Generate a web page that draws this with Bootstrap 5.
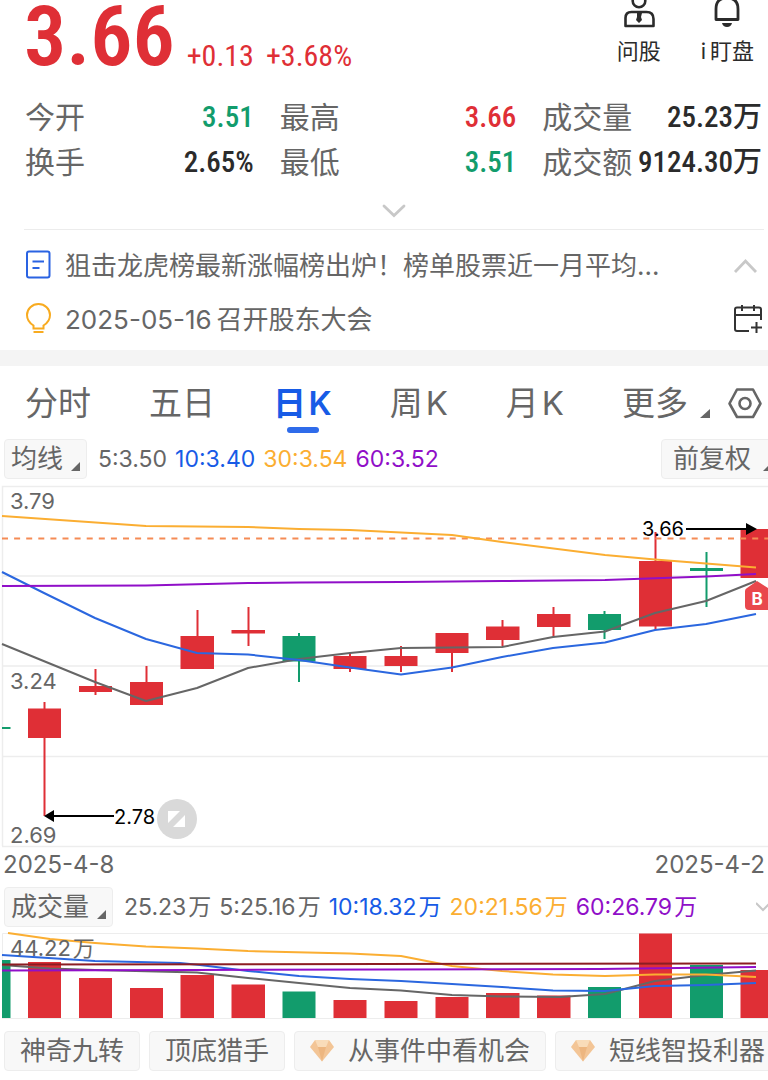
<!DOCTYPE html>
<html lang="zh-CN">
<head>
<meta charset="utf-8">
<meta name="viewport" content="width=device-width, initial-scale=1">
<title>日K 行情</title>
<link rel="stylesheet" href="https://cdn.jsdelivr.net/npm/bootstrap@5.3.0/dist/css/bootstrap.min.css">
<style>
:root{--up:#df2f36;--down:#129c6c;--ink:#666;--blue:#175be6;--gold:#fbae32;--violet:#900fc8}
body{font-family:Inter,"Noto Sans CJK SC",sans-serif;color:var(--ink);background:#fff;overflow-x:hidden}
svg{display:block;flex:none}
.din{font-family:"Roboto Condensed",Roboto,"Noto Sans CJK SC",sans-serif;font-weight:500;color:#2b2b2b}
.c-up{color:var(--up)}.c-down{color:var(--down)}.c-blue{color:var(--blue)}.c-gold{color:var(--gold)}.c-violet{color:var(--violet)}
.quote{height:80px;padding:0 14px 0 24px}
.price{font-size:84px;line-height:74px;font-weight:600}
.delta{font-size:30px;line-height:36px;font-weight:400;padding-top:38px;margin-left:12px}
.tool{font-size:22px;line-height:28px;color:#2b2b2b}
.stats{display:grid;grid-template-columns:229fr 237fr 220fr;column-gap:26px;row-gap:1px;padding:15px 6px 0 25px;font-size:30px;line-height:44px}
.stats .din{font-size:29px;white-space:nowrap}
.expand{padding:0 0 0 20px}
.notes{margin:0 4px 0 24px;border-top:1px solid #ececec;padding:8px 0 4px;font-size:26px}
.notes>div{height:54px}
.notes a{color:var(--ink)}
.band{height:16px;background:#f4f4f4}
.tabs{height:73px;padding:8px 6px 0 25px}
.tabs button{font-size:33px;line-height:58px;color:var(--ink);position:relative}
.tabs .on{color:var(--blue);font-weight:600}
.tabs .on::after{content:"";position:absolute;left:14px;bottom:-1px;width:32px;height:6px;border-radius:3px;background:#2f6bea}
.legendrow{height:40px;font-size:23px;white-space:nowrap;overflow:hidden}
.pick{height:40px;background:#f8f8f8;border:1px solid #ededed;border-radius:4px;font-size:26px;line-height:38px;color:var(--ink);white-space:nowrap;flex:none;padding:0 6px}
.legendrow .pick:first-child{margin-right:11px}
.adjust{width:112px;margin-right:-5px;padding:0 0 0 11px}
.adjust svg{margin-left:12px}
.chips{gap:9px;padding:10px 0}
.chips .pick{padding:0 15px}
.chips svg{margin-right:14px}
.dates{height:36px;font-size:24px;line-height:28px;padding:0 3px}
</style>
</head>
<body>
<header class="quote d-flex">
  <div class="din c-up price">3.66</div>
  <div class="din c-up delta d-flex"><span class="me-2">+0.13</span><span class="ms-1">+3.68%</span></div>
  <div class="d-flex align-items-start ms-auto gap-4">
    <button class="btn p-0 border-0 rounded-0 tool me-3">
      <svg class="mx-auto" width="44" height="37" viewBox="616 0 44 37" fill="none" stroke="#2b2b2b" stroke-width="2.6"><circle cx="638" cy="1" r="6.3"/><path d="M624.500 26V18q0-6 6-6h15q7 0 7 7v7Z" stroke-linejoin="round"/><path d="M636 13h5l-1 4 1 3-3 3-3-3 1-3Z" fill="#2b2b2b" stroke="none"/></svg>问股</button>
    <button class="btn p-0 border-0 rounded-0 tool">
      <svg class="mx-auto" width="44" height="37" viewBox="707 0 44 37" fill="none" stroke="#2b2b2b" stroke-width="2.8"><path d="M718 19.500V9q0-11 11-11t11 11v10.500Z" stroke-linejoin="round"/><path d="M724 23h10q-1 4-5 4t-5-4Z" fill="#2b2b2b" stroke="none"/></svg>i&#8201;盯盘</button>
  </div>
</header>

<section class="stats">
  <div class="d-flex justify-content-between"><span>今开</span><span class="din c-down">3.51</span></div>
  <div class="d-flex justify-content-between"><span>最高</span><span class="din c-up">3.66</span></div>
  <div class="d-flex justify-content-between"><span>成交量</span><span class="din">25.23万</span></div>
  <div class="d-flex justify-content-between"><span>换手</span><span class="din">2.65%</span></div>
  <div class="d-flex justify-content-between"><span>最低</span><span class="din c-down">3.51</span></div>
  <div class="d-flex justify-content-between"><span>成交额</span><span class="din">9124.30万</span></div>
</section>
<button class="btn expand border-0 d-block w-100" aria-label="展开">
  <svg class="w-100" height="45" viewBox="374 184 40 45" fill="none" stroke="#c8c8c8" stroke-width="2.8" stroke-linecap="round"><path d="M384 206l10 9.500 10-9.500"/></svg>
</button>

<section class="notes">
  <div class="d-flex align-items-center">
    <svg width="41" height="30" viewBox="24 249 41 30" fill="none" stroke="#2a63e2" stroke-width="2"><rect x="27" y="250.500" width="22.500" height="26" rx="2"/><path d="M32.500 260.500h11.500M32.500 267h7"/></svg>
    <a href="#" class="text-decoration-none text-nowrap">狙击龙虎榜最新涨幅榜出炉！榜单股票近一月平均…</a>
    <svg class="ms-auto" width="32" height="20" viewBox="732 254 32 20" fill="none" stroke="#c8c8c8" stroke-width="2.8"><path d="M735 271l10.500-11 10.500 11"/></svg>
  </div>
  <div class="d-flex align-items-center">
    <svg width="41" height="32" viewBox="24 301 41 32" fill="none" stroke="#f8ab20" stroke-width="2"><path d="M33.500 326.500v-3q-6.500-4-6.500-10.500a11.500 11 0 0 1 23 0q0 6.500-6.500 10.500v3Z"/><path d="M33.500 330h10"/></svg>
    <a href="#" class="text-decoration-none text-nowrap">2025-05-16&#8201;召开股东大会</a>
    <button class="btn p-0 border-0 ms-auto" aria-label="添加日程"><svg width="32" height="30" viewBox="732 301 32 30" fill="none" stroke="#333" stroke-width="2"><path d="M749 328H737q-2 0-2-2V306.500q0-2 2-2h22q2 0 2 2V317M735 312h26M742 302v6M754 302v6M751 324.500h11M756.500 319v11"/></svg></button>
  </div>
</section>
<div class="band"></div>

<nav class="tabs d-flex justify-content-between align-items-start">
  <button class="btn p-0 border-0">分时</button>
  <button class="btn p-0 border-0">五日</button>
  <button class="btn p-0 border-0 on">日&#8202;K</button>
  <button class="btn p-0 border-0">周&#8202;K</button>
  <button class="btn p-0 border-0">月&#8202;K</button>
  <div class="d-flex"><button class="btn p-0 border-0 d-flex">更多<svg style="margin-left:12px" width="10" height="50" viewBox="0 0 10 50"><path d="M10 35v9H0Z" fill="#666"/></svg></button>
  <button class="btn p-0 border-0 ms-3" aria-label="设置"><svg width="36" height="58" viewBox="727 372 36 58" fill="none" stroke="#666" stroke-width="2.6" stroke-linejoin="round"><path d="M738 387.500h16l7.500 14-7.500 13.500H738l-7.500-13.500Z"/><circle cx="746" cy="401.500" r="5.500"/></svg></button></div>
</nav>

<div class="legendrow d-flex align-items-center ps-1">
  <button class="btn pick d-flex">均线<svg class="ms-2" width="9" height="36" viewBox="0 0 9 36"><path d="M9 22v9H0Z" fill="#666"/></svg></button>
  <span>5:3.50</span><span class="c-blue ms-2">10:3.40</span><span class="c-gold ms-2">30:3.54</span><span class="c-violet ms-2">60:3.52</span>
  <button class="btn pick adjust d-flex ms-auto">前复权<svg width="9" height="36" viewBox="0 0 9 36"><path d="M9 22v9H0Z" fill="#666"/></svg></button>
</div>

<svg class="w-100" viewBox="0 478 768 372" font-family="Inter,sans-serif" role="img" aria-label="日K线图">
  <path d="M2.500 845V485.500H768M2 575H768M2 665H768M2 755.500H768M2 845.500H768" fill="none" stroke="#ededed" stroke-width="1.5"/>
  <g font-size="22" fill="#666"><text x="10" y="508">3.79</text><text x="10" y="688">3.24</text><text x="10" y="842">2.69</text></g>
  <g stroke="#df2f36" stroke-width="2"><path d="M44.500 701V815M95.500 668V694M146.500 665V700M197.500 609V650M248.500 606V645M350 652V671M401 645V671M452 640V671M502.500 619V645M553.500 606V635M655.500 531V629"/></g>
  <path d="M299 632V681M604.500 610V638M706.500 551V606" stroke="#129c6c" stroke-width="2"/>
  <path fill="#df2f36" d="M28 707.500h33v29.500h-33ZM79 685h33v6h-33ZM130 681h33v23h-33ZM180.500 635h33.500v33h-33.500ZM231.500 629h33.500v3.500h-33.500ZM333.500 655h33v13h-33ZM384.500 655h33v10h-33ZM435.500 632h33v20h-33ZM486 625.500h33.500v13.500h-33.500ZM537 613h33.500v13h-33.500ZM639 560h33v65.500h-33ZM740.500 528H768v49H740.500Z"/>
  <path d="M282.500 635h33v25.500h-33ZM588 613h33v16h-33ZM690 567h33v3h-33ZM2 726h8.500v2H2Z" fill="#129c6c"/>
  <path d="M2 537.500H768" stroke="#f58b55" stroke-width="2" stroke-dasharray="6 6.1"/>
  <g fill="none" stroke-width="2" stroke-linejoin="round">
    <path stroke="#666" d="M2 643L95 681 146 700 197 687 248 667 299 658 350 652 401 647 452 646.500 502 646 553 636 605 630.500 655 612 706 600 756 580"/>
    <path stroke="#2b67df" d="M2 571L44 592 95 617 146 638 197 652 248 653.500 299 659 350 666.500 401 673.500 452 666.500 502 656 553 647 605 641.500 655 629 706 623 756 613"/>
    <path stroke="#fbae32" d="M2 515L146 525 248 526 299 528 350 529 452 534 502 541 605 554 655 558.500 706 562.500 756 566.500"/>
    <path stroke="#900fc8" d="M2 585L146 584.500 248 582 299 581.500 401 581 502 580 605 579 706 575.500 756 573"/>
  </g>
  <g fill="#000"><path d="M44 815l10-6v5h60v2H54v5ZM757 528l-11-6v5h-60v2h60v5Z"/><g font-size="20"><text x="114" y="823">2.78</text><text x="642" y="535">3.66</text></g></g>
  <circle cx="177" cy="818" r="20" fill="#d9d9d9"/><path d="M168 810h12l-12 12ZM185 814v12H173Z" fill="#fff"/>
  <path d="M757 580l11 7v22H749q-4 0-4-4V590q0-2 2-3Z" fill="#e9474c"/><text x="757" y="604" text-anchor="middle" font-size="17" font-weight="700" fill="#fff">B</text>
</svg>
<div class="dates d-flex justify-content-between"><span>2025-4-8</span><span>2025-4-2</span></div>

<div class="legendrow d-flex align-items-center ps-1">
  <button class="btn pick d-flex">成交量<svg class="ms-2" width="9" height="36" viewBox="0 0 9 36"><path d="M9 22v9H0Z" fill="#666"/></svg></button>
  <span>25.23&#8202;万</span><span class="ms-2">5:25.16&#8202;万</span><span class="c-blue ms-2">10:18.32&#8202;万</span><span class="c-gold ms-2">20:21.56&#8202;万</span><span class="c-violet ms-2">60:26.79&#8202;万</span>
  <svg class="ms-auto" width="12" height="16" viewBox="0 0 12 16" fill="none" stroke="#c8c8c8" stroke-width="2"><path d="M0 4l7 7 7-7"/></svg>
</div>
<svg class="w-100" viewBox="0 926 768 94" font-family="Inter,'Noto Sans CJK SC',sans-serif" role="img" aria-label="成交量图">
  <path d="M2.500 1017V932.500H768M2 1017.500H768" fill="none" stroke="#ededed"/>
  <path fill="#129c6c" d="M2 959h8.500v58H2ZM282.500 990.500h33v26.500h-33ZM588 986h33v31h-33ZM690 964h33v53h-33Z"/>
  <path fill="#df2f36" d="M28 961h33v56h-33ZM79 977h33v40h-33ZM130 987h33v30h-33ZM180.500 974h33.500v43h-33.500ZM231.500 983.500h33.500v33.500h-33.500ZM333.500 999h33v18h-33ZM384.500 1000h33v17h-33ZM435.500 996h33v21h-33ZM486 992h33.500v25h-33.500ZM537 994.500h33.500v22.500h-33.500ZM639 932.500h33v84.500h-33ZM740.500 969H768v48H740.500Z"/>
  <g fill="none" stroke-width="2" stroke-linejoin="round">
    <path stroke="#666" d="M2 964L50 967.500 95 969 197 971.500 248 977 299 982 350 987 401 989.500 452 994 502 995.500 560 996 605 993 655 980 706 974 756 969.500"/>
    <path stroke="#2b67df" d="M2 954L95 960 180 962 200 964 248 970 299 975 350 978 401 980 452 983 502 986 553 989.500 605 990 655 985 706 984 756 982"/>
    <path stroke="#fbae32" d="M8 932L50 938 95 942 146 945.500 197 947.500 248 950 350 952.500 401 955 452 965 502 970 553 973.500 605 975 655 973.500 706 973.500 756 976"/>
    <path stroke="#900fc8" d="M2 969.500L197 969 600 968 756 966"/>
    <path stroke="#8c1c22" d="M2 963.500L756 962.500"/>
  </g>
  <text x="10" y="955" font-size="22" fill="#666">44.22&#8202;万</text>
</svg>

<div class="chips d-flex overflow-hidden ps-1">
  <button class="btn pick">神奇九转</button>
  <button class="btn pick">顶底猎手</button>
  <button class="btn pick d-flex align-items-center"><svg width="24" height="22" viewBox="0 0 24 22"><path d="M5 0h14l5 7-12 14.500L0 7Z" fill="#f3c596"/><path d="M5 0h14l-3 7H8Z" fill="#f9dcb9"/><path d="M8 7h8l-4 14.500Z" fill="#edb680"/></svg>从事件中看机会</button>
  <button class="btn pick d-flex align-items-center"><svg width="24" height="22" viewBox="0 0 24 22"><path d="M5 0h14l5 7-12 14.500L0 7Z" fill="#f3c596"/><path d="M5 0h14l-3 7H8Z" fill="#f9dcb9"/><path d="M8 7h8l-4 14.500Z" fill="#edb680"/></svg>短线智投利器</button>
</div>
<script src="https://cdn.jsdelivr.net/npm/bootstrap@5.3.0/dist/js/bootstrap.bundle.min.js"></script>
</body>
</html>
